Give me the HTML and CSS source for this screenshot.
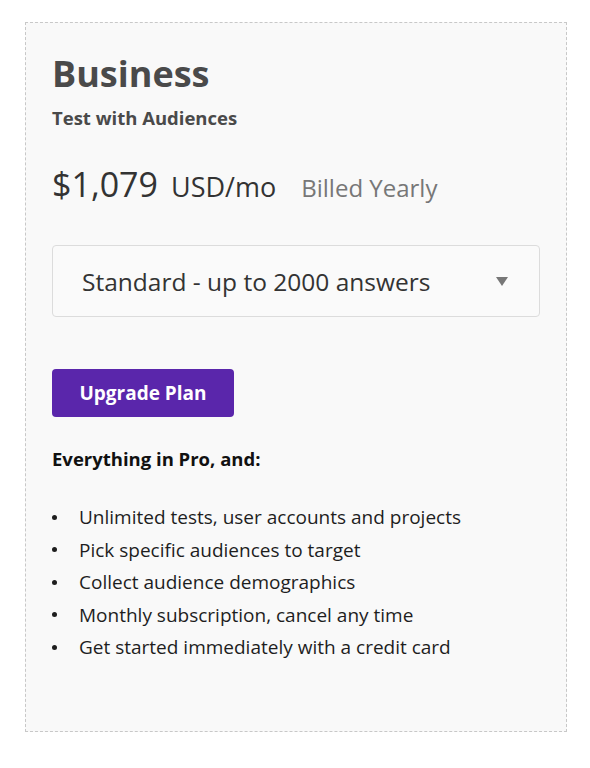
FILE: index.html
```html
<!DOCTYPE html>
<html lang="en">
<head>
    <meta charset="UTF-8">
    <title>Business plan</title>
    <link rel="stylesheet" href="styles.css">
</head>
<body>
<div class="plan">
    <h2 class="plan-name">Business</h2>
    <p class="plan-sub">Test with Audiences</p>

    <div class="price">
        <span class="amount">$1,079</span>
        <span class="unit">USD/mo</span>
        <span class="billed">Billed Yearly</span>
    </div>

    <div class="select">
        <span>Standard - up to 2000 answers</span>
        <span class="arrow"></span>
    </div>

    <button class="upgrade">Upgrade Plan</button>

    <p class="includes">Everything in Pro, and:</p>
    <ul class="features">
        <li>Unlimited tests, user accounts and projects</li>
        <li>Pick specific audiences to target</li>
        <li>Collect audience demographics</li>
        <li>Monthly subscription, cancel any time</li>
        <li>Get started immediately with a credit card</li>
    </ul>
</div>
</body>
</html>
```

FILE: styles.css
```css
body {
    margin: 0;
    padding: 22px 0 0 25px;
    background: #fff;
    font-family: "Open Sans", sans-serif;
    color: #111;
}
.plan {
    box-sizing: border-box;
    width: 542px;
    height: 710px;
    padding: 29px 26px 0 26px;
    border: 1px dashed #c8c8c8;
    background: #f9f9f9;
}
.plan-name {
    margin: 0;
    font-size: 36px;
    line-height: 44px;
    font-weight: 700;
    color: #4a4a4a;
}
.plan-sub {
    margin: 11px 0 0;
    font-size: 18.5px;
    line-height: 22px;
    font-weight: 700;
    color: #4a4a4a;
}
.price {
    margin-top: 35px;
    display: flex;
    align-items: baseline;
    line-height: 40px;
    color: #333;
}
.amount {
    font-size: 34px;
}
.unit {
    font-size: 27px;
    margin-left: 13px;
}
.billed {
    font-size: 24px;
    color: #777;
    margin-left: 25px;
}
.select {
    box-sizing: border-box;
    margin-top: 37px;
    height: 72px;
    border: 1px solid #dcdcdc;
    border-radius: 4px;
    background: #fafafa;
    display: flex;
    align-items: center;
    justify-content: space-between;
    padding: 0 31px 0 29px;
    font-size: 24.5px;
    color: #333;
}
.arrow {
    width: 0;
    height: 0;
    border-left: 6px solid transparent;
    border-right: 6px solid transparent;
    border-top: 9px solid #777;
}
.upgrade {
    display: block;
    margin-top: 52px;
    width: 182px;
    height: 48px;
    border: 0;
    border-radius: 4px;
    background: #5a26ab;
    color: #fff;
    font-family: inherit;
    font-size: 19px;
    font-weight: 700;
}
.includes {
    margin: 31px 0 0;
    font-size: 18.5px;
    line-height: 22px;
    font-weight: 700;
    color: #111;
}
.features {
    margin: 31px 0 0;
    padding: 0;
    list-style: none;
    font-size: 19px;
    color: #1e1e1e;
}
.features li {
    display: flex;
    align-items: center;
    line-height: 32.5px;
}
.features li::before {
    content: "";
    width: 5px;
    height: 5px;
    margin-right: 22px;
    border-radius: 50%;
    background: #1e1e1e;
    flex: none;
}
```
